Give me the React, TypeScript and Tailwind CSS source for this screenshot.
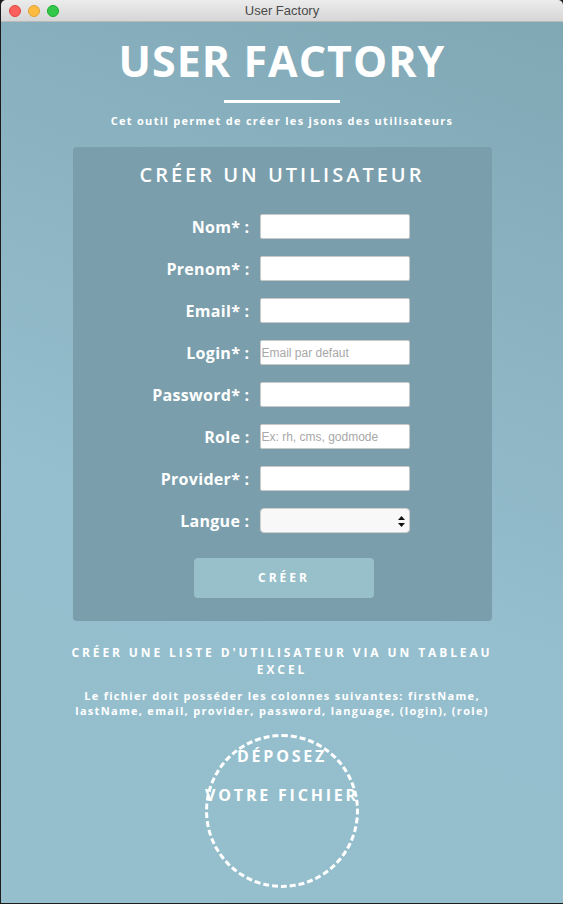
import * as React from "react";

const fields: { label: string; placeholder?: string }[] = [
  { label: "Nom* :" },
  { label: "Prenom* :" },
  { label: "Email* :" },
  { label: "Login* :", placeholder: "Email par defaut" },
  { label: "Password* :" },
  { label: "Role :", placeholder: "Ex: rh, cms, godmode" },
  { label: "Provider* :" },
];

function TitleBar() {
  return (
    <div className="relative flex h-[22px] items-center justify-center rounded-t-[5px] border-b border-[#b9b9b9] bg-[linear-gradient(#ececec,#d6d6d6)]">
      <div className="absolute left-[8px] top-[5px] flex gap-[7px]">
        <span className="h-[12px] w-[12px] rounded-full border border-[#e0443e] bg-[#fc605c]" />
        <span className="h-[12px] w-[12px] rounded-full border border-[#dea236] bg-[#fdbc40]" />
        <span className="h-[12px] w-[12px] rounded-full border border-[#1aab29] bg-[#34c84a]" />
      </div>
      <span className="font-['Liberation_Sans',sans-serif] text-[13px] text-[#4a4a4a]">User Factory</span>
    </div>
  );
}

function Field({ label, placeholder }: { label: string; placeholder?: string }) {
  return (
    <div className="flex items-center">
      <label className="w-[187px] pr-[10px] text-right text-[16px] font-bold tracking-[0.3px] text-white">{label}</label>
      <input
        placeholder={placeholder}
        className="h-[25px] w-[150px] rounded-[2px] border border-[#c9c9c9] bg-white px-[1px] font-['Liberation_Sans',sans-serif] text-[12px] text-[#333] outline-none placeholder:text-[#a8a8a8]"
      />
    </div>
  );
}

export default function App() {
  return (
    <div className="h-[904px] w-[563px] overflow-hidden bg-[#1c1c1c]">
      <div className="flex h-[903px] w-[563px] flex-col pl-[1px]">
        <TitleBar />
        <main className="flex flex-1 flex-col items-center bg-[linear-gradient(200deg,#7fa7b4_0%,#8db5c4_35%,#95bece_60%,#95bfcc_100%)] font-['Open_Sans',sans-serif] text-white">
          <h1 className="mt-[13px] text-[43px] font-bold leading-[52px] tracking-[1px]">USER FACTORY</h1>
          <div className="mt-[13px] h-[3px] w-[116px] bg-white" />
          <p className="mt-[10px] text-[11px] font-bold leading-[15px] tracking-[1.3px]">
            Cet outil permet de créer les jsons des utilisateurs
          </p>

          <section className="mt-[19px] flex w-[419px] flex-col items-stretch rounded-[4px] bg-[#7a9eab] pb-[23px]">
            <h2 className="mt-[14px] text-center text-[20px] font-semibold leading-[28px] tracking-[3px]">
              CRÉER UN UTILISATEUR
            </h2>
            <div className="mt-[25px] flex flex-col gap-[17px]">
              {fields.map((f) => (
                <Field key={f.label} {...f} />
              ))}
              <div className="flex items-center">
                <label className="w-[187px] pr-[10px] text-right text-[16px] font-bold tracking-[0.3px] text-white">
                  Langue :
                </label>
                <div className="relative h-[25px] w-[150px] rounded-[4px] border border-[#cfcfcf] bg-[#f8f8f8]">
                  <select className="h-full w-full appearance-none bg-transparent outline-none" />
                  <svg className="absolute right-[4px] top-[7px]" width="7" height="11" viewBox="0 0 7 11">
                    <path d="M3.5 0 L7 4 H0 Z" fill="#111" />
                    <path d="M3.5 11 L7 7 H0 Z" fill="#111" />
                  </svg>
                </div>
              </div>
            </div>
            <div className="mt-[25px] flex justify-center pl-[4px]">
              <button className="h-[40px] w-[180px] rounded-[4px] bg-[#97c0ca] text-[12px] font-bold tracking-[3px] text-white">
                CRÉER
              </button>
            </div>
          </section>

          <h3 className="mt-[23px] w-[432px] text-center text-[12px] font-bold leading-[17px] tracking-[2.9px]">
            CRÉER UNE LISTE D'UTILISATEUR VIA UN TABLEAU EXCEL
          </h3>
          <p className="mt-[10px] w-[432px] text-center text-[11px] font-bold leading-[15px] tracking-[1.3px]">
            Le fichier doit posséder les colonnes suivantes: firstName, lastName, email, provider, password, language, (login), (role)
          </p>
          <div className="mt-[16px] flex h-[154px] w-[154px] flex-col items-center rounded-full border-[3px] border-dashed border-white">
            <span className="whitespace-nowrap text-[16px] font-bold leading-[38px] tracking-[2.8px]">DÉPOSEZ</span>
            <span className="whitespace-nowrap text-[16px] font-bold leading-[40px] tracking-[2.8px]">VOTRE FICHIER</span>
          </div>
        </main>
      </div>
    </div>
  );
}
